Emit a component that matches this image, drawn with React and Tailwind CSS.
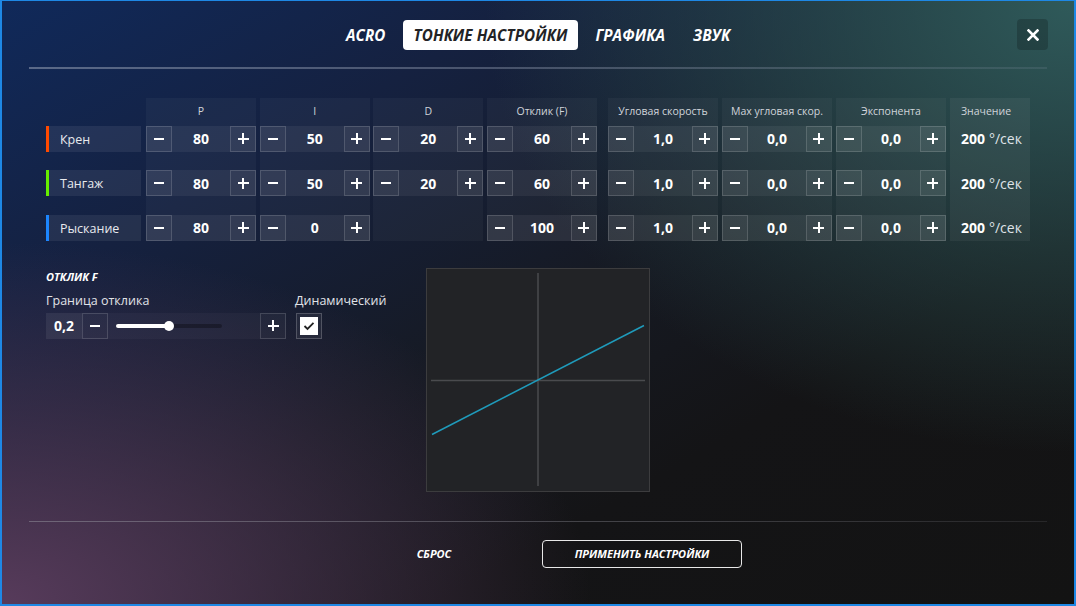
import React from "react";

const rows = [
  { name: "Крен", color: "bg-[#ff4a00]", vals: ["80", "50", "20", "60", "1,0", "0,0", "0,0"] },
  { name: "Тангаж", color: "bg-[#66ee00]", vals: ["80", "50", "20", "60", "1,0", "0,0", "0,0"] },
  { name: "Рыскание", color: "bg-[#1c86ff]", vals: ["80", "0", null, "100", "1,0", "0,0", "0,0"] },
];

const headers = ["P", "I", "D", "Отклик (F)", "Угловая скорость", "Max угловая скор.", "Экспонента"];

function Btn({ children }) {
  return (
    <div className="w-[26px] h-[26px] flex items-center justify-center border border-white/15 bg-white/[0.04] text-white text-[17px] font-bold leading-none">
      {children}
    </div>
  );
}

function Minus() {
  return <div className="w-[10px] h-[2px] bg-white" />;
}
function Plus() {
  return (
    <div className="relative w-[11px] h-[11px]">
      <div className="absolute left-0 top-[4.5px] w-[11px] h-[2px] bg-white" />
      <div className="absolute top-0 left-[4.5px] w-[2px] h-[11px] bg-white" />
    </div>
  );
}

function Stepper({ value }) {
  return (
    <div className="h-[26px] flex bg-white/[0.06]">
      <Btn><Minus /></Btn>
      <div className="flex-1 flex items-center justify-center text-white text-[14px] font-bold">{value}</div>
      <Btn><Plus /></Btn>
    </div>
  );
}

function Column({ header, idx }) {
  return (
    <div className="w-[110px] flex flex-col bg-white/[0.035] pb-0">
      <div className="h-[28px] flex items-center justify-center text-[10.5px] text-[#d0d4da]">{header}</div>
      <div className="flex flex-col gap-[18.5px]">
        {rows.map((r, i) => (
          <div key={i} className="h-[26px]">
            {r.vals[idx] !== null ? <Stepper value={r.vals[idx]} /> : null}
          </div>
        ))}
      </div>
    </div>
  );
}

export default function App() {
  return (
    <div className="w-[1076px] h-[606px] overflow-hidden border-t border-l-2 border-r-2 border-b-2 border-[#1e88e5] font-['Open_Sans',sans-serif] text-white bg-[radial-gradient(ellipse_55%_60%_at_0%_100%,#573b5b_0%,rgba(87,59,91,0)_100%),radial-gradient(ellipse_55%_75%_at_100%_0%,#2f5a5a_0%,rgba(47,90,90,0)_100%),linear-gradient(150deg,#10295a_0%,#152140_25%,#161a24_50%,#141416_70%,#131313_100%)]">
      {/* Header */}
      <div className="relative pt-[19px] flex justify-center">
        <div className="flex gap-[6px] h-[30px]">
          {["ACRO", "ТОНКИЕ НАСТРОЙКИ", "ГРАФИКА", "ЗВУК"].map((t, i) => (
            <div
              key={t}
              className={
                "px-[11px] flex items-center rounded-[4px] text-[15.2px] font-bold italic tracking-[0.1px] " +
                (i === 1 ? "bg-white text-[#222326]" : "text-white")
              }
            >
              {t}
            </div>
          ))}
        </div>
        <div className="absolute right-[26px] top-[18px] w-[31px] h-[31px] rounded-[4px] bg-black/20 flex items-center justify-center">
          <svg width="12" height="12" viewBox="0 0 12 12">
            <path d="M1.5 1.5 L10.5 10.5 M10.5 1.5 L1.5 10.5" stroke="white" strokeWidth="2.6" strokeLinecap="square" />
          </svg>
        </div>
      </div>
      <div className="mt-[17px] mx-[27px] h-[1.5px] bg-[linear-gradient(90deg,rgba(150,160,180,0.55),rgba(150,160,180,0.35)_60%,rgba(150,160,180,0.15))]" />

      {/* Table */}
      <div className="mt-[29px] ml-[44px] flex">
        <div className="w-[95px] mr-[5px] flex flex-col">
          <div className="h-[28px]" />
          <div className="flex flex-col gap-[18.5px]">
            {rows.map((r) => (
              <div key={r.name} className="h-[26px] flex bg-white/[0.07]">
                <div className={"w-[3px] h-full " + r.color} />
                <div className="pl-[11px] pt-[3px] flex items-center text-[12.5px] text-[#e8eaee]">{r.name}</div>
              </div>
            ))}
          </div>
        </div>
        <div className="flex gap-[3.67px]">
          {headers.slice(0, 4).map((h, i) => (
            <Column key={h} header={h} idx={i} />
          ))}
        </div>
        <div className="ml-[11px] flex gap-[4px]">
          {headers.slice(4).map((h, i) => (
            <Column key={h} header={h} idx={i + 4} />
          ))}
          <div className="w-[80px] flex flex-col bg-white/[0.05]">
            <div className="h-[28px] pl-[11px] flex items-center text-[10.5px] text-[#d0d4da]">Значение</div>
            <div className="flex flex-col gap-[18.5px]">
              {rows.map((r) => (
                <div key={r.name} className="h-[26px] pl-[11px] flex items-center text-[14px]">
                  <span className="font-bold">200</span>
                  <span className="ml-[4px] text-[#dfe3e8]">°/сек</span>
                </div>
              ))}
            </div>
          </div>
        </div>
      </div>

      {/* Bottom section */}
      <div className="mt-[27px] ml-[44px] flex h-[224px]">
        <div className="w-[380px] pt-[2px]">
          <div className="text-[11px] font-bold italic leading-[14px]">ОТКЛИК F</div>
          <div className="mt-[8px] flex">
            <div className="w-[249px]">
              <div className="text-[12.5px] text-[#e0e3e8] leading-[18px]">Граница отклика</div>
              <div className="mt-[3px] h-[26px] flex">
                <div className="w-[36px] flex items-center justify-center bg-white/[0.07] text-[14px] font-bold">0,2</div>
                <Btn><Minus /></Btn>
                <div className="w-[152px] flex items-center px-[8px] bg-white/[0.03]">
                  <div className="relative w-[106px] h-[4px] rounded-full bg-black/30">
                    <div className="absolute left-0 top-0 h-[4px] w-[53px] rounded-full bg-white" />
                    <div className="absolute left-[48px] top-[-3px] w-[10px] h-[10px] rounded-full bg-white" />
                  </div>
                </div>
                <Btn><Plus /></Btn>
              </div>
            </div>
            <div>
              <div className="text-[12.5px] text-[#e0e3e8] leading-[18px]">Динамический</div>
              <div className="mt-[3px] ml-[1px] w-[26px] h-[26px] border border-white/20 bg-white/[0.05] flex items-center justify-center">
                <div className="w-[18px] h-[18px] bg-white flex items-center justify-center">
                  <svg width="12" height="10" viewBox="0 0 12 10">
                    <path d="M1.5 5 L4.5 8 L10.5 1.8" fill="none" stroke="#222" strokeWidth="1.8" />
                  </svg>
                </div>
              </div>
            </div>
          </div>
        </div>
        <div className="w-[224px] h-[224px] border border-[#3c3c3e] bg-[#222326]">
          <svg width="222" height="222" viewBox="0 0 222 222">
            <line x1="111" y1="4" x2="111" y2="217" stroke="#4a4b4e" strokeWidth="1.5" />
            <line x1="4" y1="111.5" x2="218" y2="111.5" stroke="#4a4b4e" strokeWidth="1.5" />
            <line x1="5" y1="165.5" x2="217" y2="56.5" stroke="#1f9bbb" strokeWidth="1.5" />
          </svg>
        </div>
      </div>

      <div className="mt-[29px] mx-[27px] h-[1.5px] bg-[linear-gradient(90deg,rgba(150,150,160,0.5),rgba(150,150,160,0.35)_60%,rgba(150,150,160,0.15))]" />

      <div className="mt-[18px] flex justify-center gap-[8px]">
        <div className="w-[200px] h-[28px] flex items-center justify-center text-[11px] font-bold italic">СБРОС</div>
        <div className="w-[200px] h-[28px] flex items-center justify-center text-[11px] font-bold italic border border-white/90 rounded-[4px]">
          ПРИМЕНИТЬ НАСТРОЙКИ
        </div>
      </div>
    </div>
  );
}
